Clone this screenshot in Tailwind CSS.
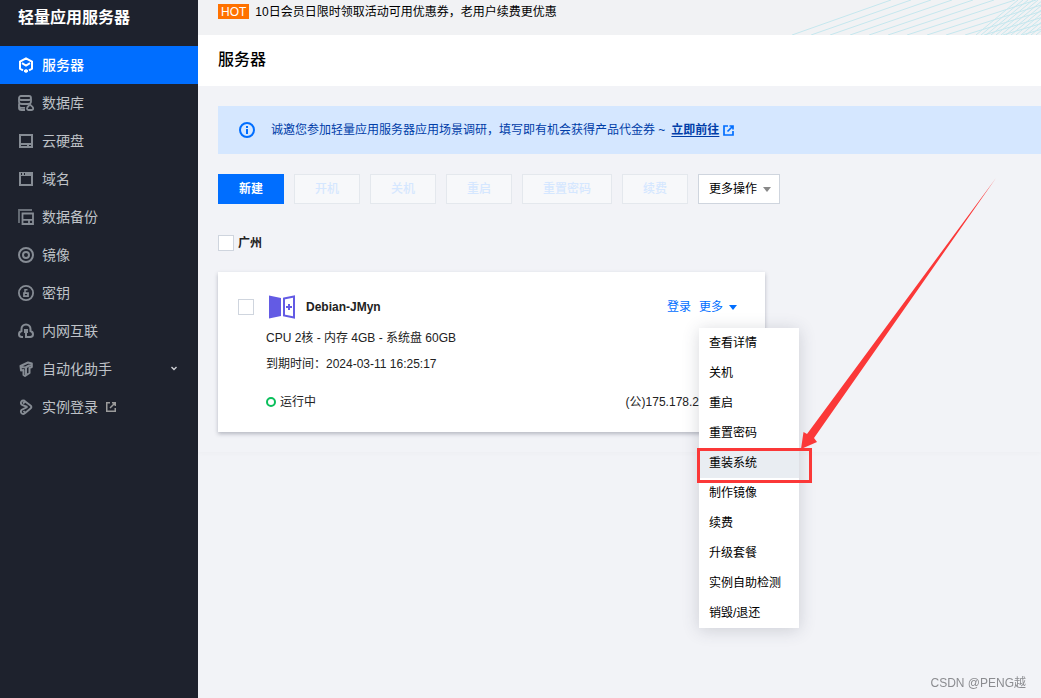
<!DOCTYPE html>
<html lang="zh-CN">
<head>
<meta charset="utf-8">
<meta name="viewport" content="width=device-width, initial-scale=1">
<title>轻量应用服务器</title>
<script src="https://cdn.jsdelivr.net/npm/@tailwindcss/browser@4"></script>
</head>
<body class="flex min-h-screen overflow-x-hidden bg-[#f2f3f7] font-['Liberation_Sans','Noto_Sans_CJK_SC',sans-serif] text-xs text-black">

<aside class="w-[198px] shrink-0 bg-[#1e222d] text-[#bfc2c7]">
  <h1 class="flex h-[46px] items-start px-[18px] pt-[6px] text-base font-bold text-white">轻量应用服务器</h1>
  <nav class="text-sm">
    <a href="#" aria-current="page" class="flex h-[38px] items-center gap-2 bg-[#006eff] px-[18px] font-medium text-white">
      <svg class="size-4" viewBox="0 0 16 16" fill="none" stroke="currentColor" stroke-width="2"><path d="M5 13.300 2 11.600V4.700L8 1.300l6 3.400v6.900l-3 1.700M4 6.200 8 8.500l4-2.300"/><path d="M6 13.200 8 12l2 1.200v1.600L8 16l-2-1.200z" fill="currentColor" stroke="none"/></svg>
      服务器</a>
    <a href="#" class="flex h-[38px] items-center gap-2 px-[18px]">
      <svg class="size-4 text-[#868c94]" viewBox="0 0 16 16" fill="none" stroke="currentColor" stroke-width="1.800"><rect x="1" y="1" width="12" height="4" rx="2"/><path d="M1 3.500v3C1 8 2 9 4 9h6c2 0 3-1 3-2.500v-3M1 8.500V11c0 1 1 1.800 2.500 1.800H7M1 11.500V13c0 1.200 1 2 2.500 2H7"/><path d="M12 9.500c-1.400 1.600-3 2.500-3 4A1.600 1.600 0 0 0 10.700 15h2.900a1.600 1.600 0 0 0 1.600-1.600c0-1.400-1.800-2.300-3.200-3.900Z"/></svg>
      数据库</a>
    <a href="#" class="flex h-[38px] items-center gap-2 px-[18px]">
      <svg class="size-4 text-[#868c94]" viewBox="0 0 16 16" fill="none" stroke="currentColor" stroke-width="2"><path d="M2 2h12v12H2zM2 11h12"/><path d="M9 12h2v2H9z" fill="currentColor" stroke="none"/></svg>
      云硬盘</a>
    <a href="#" class="flex h-[38px] items-center gap-2 px-[18px]">
      <svg class="size-4 text-[#868c94]" viewBox="0 0 16 16" fill="currentColor" fill-rule="evenodd"><path d="M1 1h14v14H1zM3 5v8h10V5zM3 2v2h1V2zM6 2v2h1V2z"/></svg>
      域名</a>
    <a href="#" class="flex h-[38px] items-center gap-2 px-[18px]">
      <svg class="size-4 text-[#868c94]" viewBox="0 0 16 16" fill="none" stroke="currentColor" stroke-width="1.800"><path d="M1 14V1h13" opacity=".75"/><path d="M4.500 4.500h10.500v10.500H4.500zM4.500 10.800H15M11 11v3.500"/></svg>
      数据备份</a>
    <a href="#" class="flex h-[38px] items-center gap-2 px-[18px]">
      <svg class="size-4 text-[#868c94]" viewBox="0 0 16 16" fill="none" stroke="currentColor" stroke-width="2"><circle cx="8" cy="8" r="7"/><circle cx="8" cy="8" r="3"/></svg>
      镜像</a>
    <a href="#" class="flex h-[38px] items-center gap-2 px-[18px]">
      <svg class="size-4 text-[#868c94]" viewBox="0 0 16 16" fill="none" stroke="currentColor" stroke-width="1.800"><circle cx="8" cy="8" r="7.100"/><path d="M6 8.200h4v3H6z"/><path d="M7 8V4.700h2.500" stroke-width="1.500"/></svg>
      密钥</a>
    <a href="#" class="flex h-[38px] items-center gap-2 px-[18px]">
      <svg class="size-4 text-[#868c94]" viewBox="0 0 16 16" fill="none" stroke="currentColor" stroke-width="2"><path d="M5 14H3.800A2.800 2.800 0 0 1 1 11.200C1 9.800 1.900 8.600 3.500 8V6a4.500 4.500 0 0 1 9 0v2c1.600.6 2.500 1.800 2.500 3.200a2.800 2.800 0 0 1-2.800 2.800H8V9"/><path d="M6 6h4v4H6z" fill="currentColor" stroke="none"/></svg>
      内网互联</a>
    <a href="#" class="flex h-[38px] items-center gap-2 px-[18px]">
      <svg class="size-4 text-[#868c94]" viewBox="0 0 16 16" fill="none" stroke="currentColor" stroke-width="2" stroke-linejoin="round"><path d="M2.500 5 10 1.500l3.800 1V6L11.500 7v5L7 15l-1.500-1V9L3 9.500 2.500 5ZM3 6l4.500.5L14 3M8 7v7.500"/></svg>
      <span class="grow">自动化助手</span>
      <svg class="mr-[2px] size-2 text-[#cfd1d5]" viewBox="0 0 8 8" fill="none" stroke="currentColor" stroke-width="1.400"><path d="m1.500 2 2.500 2.500L6.500 2"/></svg></a>
    <a href="#" class="flex h-[38px] items-center gap-2 px-[18px]">
      <svg class="size-4 text-[#868c94]" viewBox="0 0 16 16" fill="none" stroke="currentColor" stroke-width="1.900" stroke-linejoin="round"><path d="M9.500 8 4.500 6.200A2.400 2.400 0 1 1 7.200 2.500l5.300 4c1.200.9 1.200 2.100 0 3L7.200 14a2.400 2.400 0 1 1-2.700-3.700L9.500 8M7.200 2.500 5 4.500M7.200 14 5.500 12"/></svg>
      实例登录
      <svg class="size-[10px] text-[#9b9b9b]" viewBox="0 0 10 10" fill="none" stroke="currentColor" stroke-width="1.500"><path d="M4 .75H.75v8.500h8.500V6M6 .75h3.250V4M9 1 4 6"/></svg></a>
  </nav>
</aside>

<main class="min-w-0 grow">
  <div class="relative flex h-[35px] items-start overflow-hidden bg-[#f1f2f4] pl-5 pt-1 leading-4">
    <svg class="absolute right-0 top-0 h-[35px] w-[250px]" viewBox="0 0 250 35" fill="none" stroke="#c5e7ee" stroke-width="1"><path d="M1 35 100 0M20 35 120 0M39 35 140 0M59 35 161 0M78 35 182 0M97 35 203 0M116 35 224 0M136 35 245 0M155 35 266 0M174 35 287 0M193 35 308 0M212 35 329 0M231 35 350 0"/><path d="M185 35 227 0M190 35 232 0M195 35 237 0M200 35 242 0M205 35 247 0M210 35 252 0M215 35 257 0M220 35 262 0M225 35 267 0M230 35 272 0M235 35 277 0M240 35 282 0M245 35 287 0"/></svg>
    <strong class="h-[15px] bg-[#ff7200] px-[3px] font-normal leading-4 text-white">HOT</strong>
    <a href="#" class="ml-[6px]">10日会员日限时领取活动可用优惠券，老用户续费更优惠</a>
  </div>
  <header class="flex h-[51px] items-center bg-white px-5 pb-[2px]">
    <h2 class="text-base font-medium">服务器</h2>
  </header>

  <section class="pb-5 pl-5 pt-5 shadow-[0_2px_4px_rgba(0,0,0,0.02)]">
    <div class="flex h-12 items-center bg-[#d5e7ff] pl-[21px] text-[#003da8]">
      <svg class="mr-4 size-4 text-[#006eff]" viewBox="0 0 16 16" fill="none" stroke="currentColor" stroke-width="2"><circle cx="8" cy="8" r="7"/><path d="M8 7v5M8 4v2"/></svg>
      <span>诚邀您参加轻量应用服务器应用场景调研，填写即有机会获得产品代金券 ~</span>
      <a href="#" class="ml-[6px] flex items-center gap-1 font-bold"><span class="underline underline-offset-2">立即前往</span>
        <svg class="size-[11px] text-[#006eff]" viewBox="0 0 11 11" fill="none" stroke="currentColor" stroke-width="1.700"><path d="M5 1H1v9h9V6M6.500 1H10v3.500M10 1 4.500 6.500"/></svg></a>
    </div>

    <div class="mt-5 flex gap-[10px]">
      <button class="h-[30px] bg-[#006eff] px-[21px] font-bold text-white">新建</button>
      <button disabled class="h-[30px] border border-[#e4e8ed] bg-[#f7f8fa] px-5 font-medium text-[#d5e7ff]">开机</button>
      <button disabled class="h-[30px] border border-[#e4e8ed] bg-[#f7f8fa] px-5 font-medium text-[#d5e7ff]">关机</button>
      <button disabled class="h-[30px] border border-[#e4e8ed] bg-[#f7f8fa] px-5 font-medium text-[#d5e7ff]">重启</button>
      <button disabled class="h-[30px] border border-[#e4e8ed] bg-[#f7f8fa] px-5 font-medium text-[#d5e7ff]">重置密码</button>
      <button disabled class="h-[30px] border border-[#e4e8ed] bg-[#f7f8fa] px-5 font-medium text-[#d5e7ff]">续费</button>
      <button aria-haspopup="menu" class="flex h-[30px] items-center gap-[6px] border border-[#cfd5de] bg-white pl-[10px] pr-2">更多操作
        <svg class="h-[5px] w-2 text-[#888888]" viewBox="0 0 8 5" fill="currentColor"><path d="M0 0h8L4 5z"/></svg></button>
    </div>

    <label class="mt-[31px] flex h-4 items-center gap-1 font-bold text-[#222222]"><input type="checkbox" class="size-4 appearance-none border border-[#cfd5de] bg-white">广州</label>

    <article class="relative mt-[21px] h-40 w-[547px] bg-white px-5 pt-[25px] text-[#222222] shadow-[0_2px_4px_rgba(54,58,80,0.32)]">
      <div class="flex h-5 items-center leading-[18px]">
        <input type="checkbox" aria-label="Debian-JMyn" class="size-4 appearance-none border border-[#cfd5de] bg-white">
        <svg class="ml-[15px] h-6 w-[26px]" viewBox="0 0 26 24" fill="none" stroke="#635be4"><path d="M0 .5 12 3v18L0 23.500z" fill="#635be4" stroke="none"/><path d="M15 3.500 25 1.500v21L15 20.500zM20 9v6M17 12h6" stroke-width="2"/></svg>
        <h3 class="ml-[11px] grow font-bold">Debian-JMyn</h3>
        <a href="#" class="text-[#006eff]">登录</a>
        <button aria-haspopup="menu" aria-expanded="true" class="ml-2 mr-2 flex items-center gap-[6px] text-[#006eff]">更多
          <svg class="h-[5px] w-2" viewBox="0 0 8 5" fill="currentColor"><path d="M0 0h8L4 5z"/></svg></button>
      </div>
      <div class="pl-7 leading-[26px]">
        <p class="mt-2">CPU 2核 - 内存 4GB - 系统盘 60GB</p>
        <p>到期时间：2024-03-11 16:25:17</p>
        <div class="mt-3 flex items-center">
          <span class="mr-1 size-[10px] rounded-full border-2 border-[#0abf5b]"></span>运行中
          <span class="ml-auto mr-[46px]">(公)175.178.2</span>
        </div>
      </div>

      <ul role="menu" class="absolute left-[481px] top-14 w-[100px] bg-white text-black shadow-[0_2px_16px_rgba(54,58,80,0.2)]">
        <li><button role="menuitem" class="block h-[30px] w-full px-[10px] text-left">查看详情</button></li>
        <li><button role="menuitem" class="block h-[30px] w-full px-[10px] text-left">关机</button></li>
        <li><button role="menuitem" class="block h-[30px] w-full px-[10px] text-left">重启</button></li>
        <li><button role="menuitem" class="block h-[30px] w-full px-[10px] text-left">重置密码</button></li>
        <li class="relative">
          <button role="menuitem" class="block h-[30px] w-full bg-[#e9edf2] px-[10px] text-left">重装系统</button>
          <span class="pointer-events-none absolute -left-[2px] top-0 z-10 h-[35px] w-[115px] border-3 border-[#fb3838]"></span>
          <svg class="pointer-events-none absolute bottom-full left-[102px] -mb-px h-[273px] w-[198px]" viewBox="0 0 198 273" fill="#fb3838"><path d="M195 2 13 262l3 4L0 273l2.500-17 3.500 2Z"/></svg>
        </li>
        <li><button role="menuitem" class="block h-[30px] w-full px-[10px] text-left">制作镜像</button></li>
        <li><button role="menuitem" class="block h-[30px] w-full px-[10px] text-left">续费</button></li>
        <li><button role="menuitem" class="block h-[30px] w-full px-[10px] text-left">升级套餐</button></li>
        <li><button role="menuitem" class="block h-[30px] w-full px-[10px] text-left">实例自助检测</button></li>
        <li><button role="menuitem" class="block h-[30px] w-full px-[10px] text-left">销毁/退还</button></li>
      </ul>
    </article>
  </section>
</main>

<p class="fixed bottom-[7px] right-[15px] text-xs leading-4 text-[#8b8c90]">CSDN @PENG越</p>
</body>
</html>
